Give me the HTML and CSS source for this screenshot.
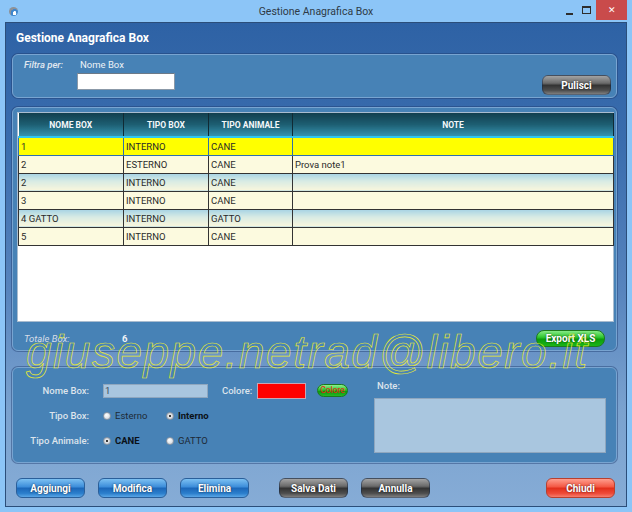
FILE: index.html
```html
<!DOCTYPE html>
<html lang="it">
<head>
<meta charset="utf-8">
<title>Gestione Anagrafica Box</title>
<link rel="stylesheet" href="styles.css">
</head>
<body>
<div class="window">
	<div class="titlebar">
		<span class="app_icon"></span>
		<span class="title">Gestione Anagrafica Box</span>
		<div class="controls">
			<span class="ctl_min"></span>
			<span class="ctl_max"></span>
			<span class="ctl_close">&#x2715;</span>
		</div>
	</div>
	<div class="client">
		<h1>Gestione Anagrafica Box</h1>

		<!-- filtro -->
		<div class="panel filter">
			<span class="filter_label">Filtra per:</span>
			<div class="filter_field">
				<label>Nome Box</label>
				<input type="text" class="filter_input">
			</div>
			<button class="btn btn_gray btn_pulisci">Pulisci</button>
		</div>

		<!-- elenco box -->
		<div class="panel list">
			<div class="grid">
				<table>
					<thead>
						<tr>
							<th class="c1">NOME BOX</th>
							<th class="c2">TIPO BOX</th>
							<th class="c3">TIPO ANIMALE</th>
							<th class="c4">NOTE</th>
						</tr>
					</thead>
					<tbody>
						<tr class="sel"><td>1</td><td>INTERNO</td><td>CANE</td><td></td></tr>
						<tr><td>2</td><td>ESTERNO</td><td>CANE</td><td>Prova note1</td></tr>
						<tr class="alt"><td>2</td><td>INTERNO</td><td>CANE</td><td></td></tr>
						<tr><td>3</td><td>INTERNO</td><td>CANE</td><td></td></tr>
						<tr class="alt"><td>4 GATTO</td><td>INTERNO</td><td>GATTO</td><td></td></tr>
						<tr><td>5</td><td>INTERNO</td><td>CANE</td><td></td></tr>
					</tbody>
				</table>
			</div>
			<div class="totals">
				<span class="tot_label">Totale Box:</span>
				<span class="tot_value">6</span>
				<button class="btn btn_green btn_export">Export XLS</button>
			</div>
		</div>

		<!-- dettaglio -->
		<div class="panel edit">
			<div class="form">
				<div class="row">
					<label class="lbl">Nome Box:</label>
					<input type="text" class="field" value="1">
					<label class="lbl_color">Colore:</label>
					<span class="swatch"></span>
					<button class="btn_color">Colore</button>
				</div>
				<div class="row">
					<label class="lbl">Tipo Box:</label>
					<span class="opt"><i class="radio"></i>Esterno</span>
					<span class="opt on"><i class="radio"></i>Interno</span>
				</div>
				<div class="row">
					<label class="lbl">Tipo Animale:</label>
					<span class="opt on"><i class="radio"></i>CANE</span>
					<span class="opt"><i class="radio"></i>GATTO</span>
				</div>
			</div>
			<div class="note">
				<label>Note:</label>
				<textarea></textarea>
			</div>
		</div>

		<div class="actions">
			<button class="btn btn_blue">Aggiungi</button>
			<button class="btn btn_blue">Modifica</button>
			<button class="btn btn_blue">Elimina</button>
			<button class="btn btn_gray btn_salva">Salva Dati</button>
			<button class="btn btn_gray">Annulla</button>
			<button class="btn btn_red btn_chiudi">Chiudi</button>
		</div>
	</div>
	<div class="watermark">giuseppe.netrad@libero.it</div>
</div>
</body>
</html>
```

FILE: styles.css
```css
* {margin:0; padding:0; box-sizing:border-box}
body {width:632px; height:512px; overflow:hidden; font-family:Roboto, "Liberation Sans", sans-serif;}

.window {
	position:relative;
	width:632px;
	height:512px;
	background-color:#8cc5f7;
	display:flex;
	flex-direction:column;
}

/* barra titolo */
.titlebar {
	height:22px;
	display:grid;
	grid-template-columns:1fr auto 1fr;
	align-items:center;
}
.app_icon {
	width:9px;
	height:9px;
	margin-left:9px;
	border-radius:50%;
	background:radial-gradient(circle at 62% 68%, #ffffff 0 22%, #3f86cc 24% 48%, #8d9299 50%);
}
.title {font-size:10.5px; color:#2e3a46;}
.controls {
	justify-self:end;
	align-self:start;
	display:flex;
	align-items:flex-start;
	padding-right:5px;
}
.ctl_min {width:7px; height:2px; background:#2d2d2d; margin:13px 9px 0 0;}
.ctl_max {width:9px; height:8px; border:1px solid #2d2d2d; border-top-width:2px; margin:6px 5px 0 0;}
.ctl_close {
	width:31px;
	height:20px;
	background-color:#c94b4b;
	color:#fff;
	font-size:9px;
	line-height:20px;
	text-align:center;
}

/* area client */
.client {
	flex:1;
	margin:0 5px 5px;
	border:1px solid #2b4e7a;
	background:linear-gradient(to bottom, #2e62a5 0%, #3a6dae 25%, #5784bd 55%, #7aa2cf 80%, #86acd6 100%);
	padding:0 9px 0 6px;
	display:flex;
	flex-direction:column;
}
h1 {
	font-size:12px;
	line-height:16px;
	color:#fff;
	padding:7px 0 0 4px;
	margin-bottom:8px;
}

.panel {
	background-color:#4782b6;
	border:1px solid #78a4d1;
	border-radius:6px;
	box-shadow:0 0 0 1px rgba(30,60,110,0.45);
}

/* filtro */
.filter {
	height:44px;
	display:flex;
	padding:3px 5px 0 11px;
}
.filter_label {
	font-size:9.5px;
	font-style:italic;
	font-weight:500;
	line-height:14px;
	color:#e3e9f0;
	width:53px;
}
.filter_field {display:flex; flex-direction:column; align-items:flex-start;}
.filter_field label {font-size:9.5px; line-height:14px; color:#eef2f6; padding-left:3px;}
.filter_input {
	width:98px;
	height:17px;
	margin-top:1px;
	border:1px solid #8b99a8;
	border-top-color:#6d7a88;
	background:#fff;
}
.btn_pulisci {margin:17px 0 0 auto;}

/* pulsanti */
.btn {
	width:69px;
	height:20px;
	border-radius:6px;
	font-family:Roboto, "Liberation Sans", sans-serif;
	font-size:10px;
	font-weight:bold;
	color:#fff;
	text-shadow:0 0 2px rgba(0,0,0,0.7);
	border:1px solid rgba(20,40,70,0.5);
}
.btn_gray {background:linear-gradient(to bottom, #a3a3a3 0%, #6a6a6a 40%, #333 52%, #4e4e4e 80%, #7e7e7e 100%);}
.btn_blue {background:linear-gradient(to bottom, #7cc0f2 0%, #3f8fdb 42%, #1c68ba 52%, #2c7fcc 80%, #5aa6e6 100%); border-color:#2a5f9a;}
.btn_red {background:linear-gradient(to bottom, #ff9e8e 0%, #f45a46 42%, #e2301c 52%, #ee4a38 80%, #f77e6e 100%); border-color:#b64030;}
.btn_green {background:linear-gradient(to bottom, #86ea86 0%, #2fc72f 42%, #0b9e0b 55%, #1ab51a 100%); border-color:#1d7a1d;}

/* elenco */
.list {
	height:244px;
	margin-top:9px;
	padding:4px 2px 0 4px;
	display:flex;
	flex-direction:column;
}
.grid {
	height:210px;
	background-color:#fff;
	border:1px solid #a9bccf;
}
table {
	width:596px;
	border-collapse:collapse;
	font-size:9.5px;
	color:#2a2a2a;
}
th {
	height:24px;
	font-size:8.5px;
	font-weight:bold;
	color:#f4f8fa;
	background:linear-gradient(to bottom, #113f4e 0%, #1d5e72 50%, #3592ad 100%);
	border-right:1px solid #102a34;
	border-bottom:2px solid #2ec6f0;
}
.c1 {width:105px}
.c2 {width:85px}
.c3 {width:84px}
td {
	height:18px;
	padding:0 2px;
	border:1px solid #333;
	border-top:none;
	background-color:#fcfadf;
}
tr.alt td {background:linear-gradient(to bottom, #a6d3e4 0%, #d8ebe4 45%, #f9f6dc 100%);}
tr.sel td {background:#ffff00; border-color:#2f71ad;}

.totals {
	flex:1;
	display:flex;
	align-items:flex-start;
	padding:8px 9px 0 7px;
}
.tot_label {
	font-size:9.5px;
	font-style:italic;
	color:#d6dee8;
	line-height:17px;
	width:98px;
}
.tot_value {font-size:9.5px; font-weight:bold; color:#eef3f8; line-height:17px;}
.btn_export {width:69px; height:17px; margin-left:auto; border-radius:8px;}

/* dettaglio */
.edit {
	height:96px;
	margin-top:16px;
	display:flex;
	padding:10px 10px 0 0;
}
.form {display:flex; flex-direction:column;}
.row {display:flex; align-items:center; height:25px;}
.lbl {
	width:76px;
	text-align:right;
	font-size:9.5px;
	font-weight:500;
	color:#dde4ec;
	margin-right:14px;
}
.field {
	width:105px;
	height:14px;
	border:1px solid #8fa7bf;
	background-color:#a9c6df;
	font-family:Roboto, "Liberation Sans", sans-serif;
	font-size:9.5px;
	color:#3a4a5a;
	padding-left:1px;
}
.lbl_color {font-size:9.5px; font-weight:500; color:#dde4ec; margin-left:14px; width:35px;}
.swatch {width:49px; height:16px; background:#ff0000; border:1px solid #c8a4b4;}
.btn_color {
	width:31px;
	height:13px;
	margin-left:11px;
	border-radius:7px;
	border:1px solid #1c7a1c;
	background:linear-gradient(to bottom, #8ef08e 0%, #2cc42c 45%, #0d9a0d 60%, #25b825 100%);
	font-family:Roboto, "Liberation Sans", sans-serif;
	font-size:8.5px;
	line-height:11px;
	color:#ee1a1a;
}
.opt {
	display:flex;
	align-items:center;
	width:63px;
	font-size:9.5px;
	color:#1e2a36;
}
.opt.on {font-weight:bold; color:#0b1118;}
.radio {
	width:8px;
	height:8px;
	border-radius:50%;
	margin-right:4px;
	background:radial-gradient(circle at 40% 35%, #ffffff 0%, #dfe3e8 60%, #b9c0c8 100%);
	border:1px solid #8a96a3;
}
.opt.on .radio {background:radial-gradient(circle, #3a3a3a 0 28%, #e4e7ea 34%, #b9c0c8 100%);}

.note {
	width:232px;
	margin-left:auto;
	display:flex;
	flex-direction:column;
}
.note label {font-size:9.5px; font-weight:500; color:#dde4ec; line-height:16px; padding-left:3px;}
.note textarea {
	width:232px;
	height:55px;
	margin-top:4px;
	resize:none;
	border:1px solid #8fa7bf;
	background-color:#a9c6df;
}

/* pulsanti in basso */
.actions {
	display:flex;
	margin-top:15px;
	padding:0 2px 0 4px;
}
.actions .btn + .btn {margin-left:13px;}
.actions .btn_salva {margin-left:30px !important;}
.actions .btn_chiudi {margin-left:auto !important;}

/* filigrana */
.watermark {
	position:absolute;
	left:26px;
	top:329px;
	font-family:"Liberation Sans", Arial, sans-serif;
	font-size:46px;
	line-height:46px;
	font-style:italic;
	letter-spacing:1.5px;
	color:transparent;
	-webkit-text-stroke:0.7px #e6e832;
	pointer-events:none;
	white-space:nowrap;
}
```
